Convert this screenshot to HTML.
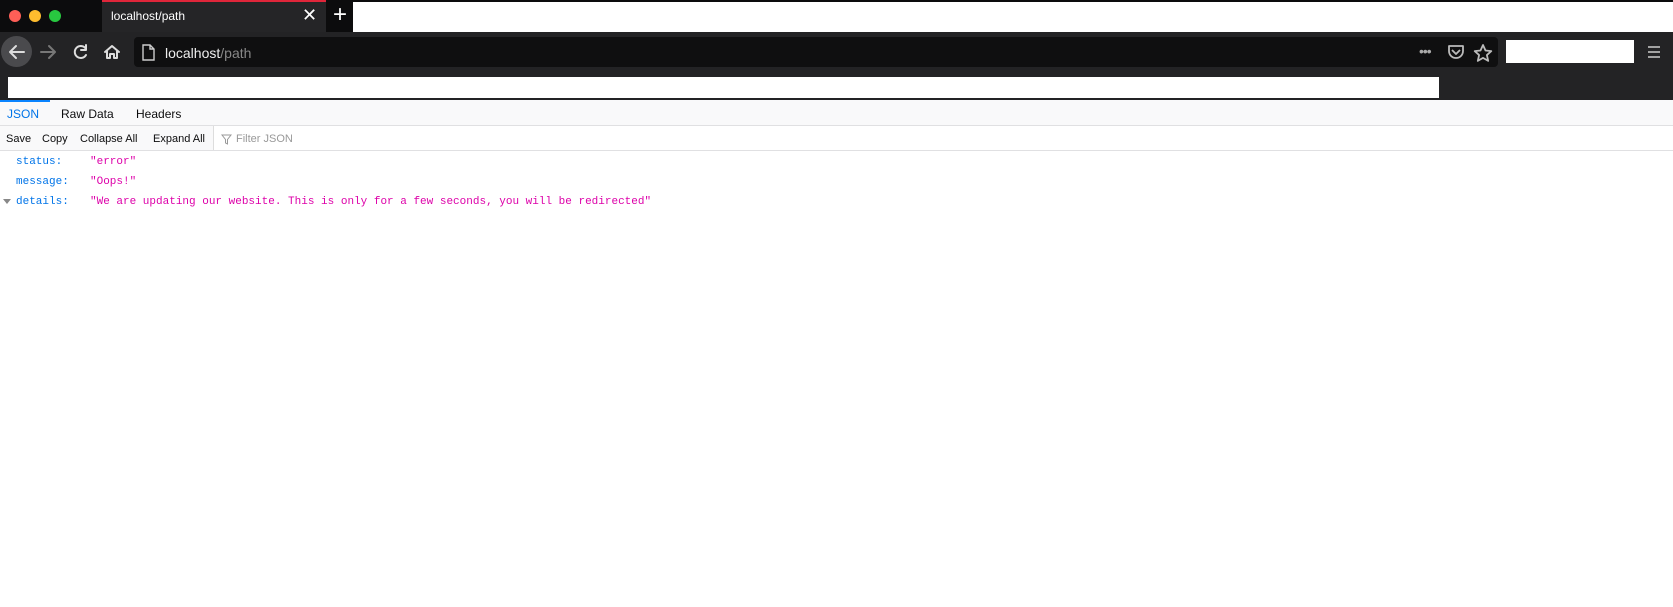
<!DOCTYPE html>
<html><head><style>
*{margin:0;padding:0;box-sizing:border-box}
body{width:1673px;height:607px;background:#fff;font-family:"Liberation Sans",sans-serif;position:relative;overflow:hidden}
.a{position:absolute}
.mono{font-family:"Liberation Mono",monospace;font-size:11px}
.k{color:#0074e8}.v{color:#dd00a9}
</style></head><body>
<div class="a" style="left:0;top:0;width:353px;height:32px;background:#0c0c0d"></div>
<div class="a" style="left:353px;top:0;width:1320px;height:32px;background:#fff;border-top:2px solid #0c0c0d"></div>
<div class="a" style="left:9px;top:10px;width:12px;height:12px;border-radius:50%;background:#fe5f57"></div>
<div class="a" style="left:29px;top:10px;width:12px;height:12px;border-radius:50%;background:#febc2e"></div>
<div class="a" style="left:49px;top:10px;width:12px;height:12px;border-radius:50%;background:#28c840"></div>
<div class="a" style="left:102px;top:0;width:224px;height:32px;background:#252527;border-top:2px solid #e0263a"></div>
<div class="a" style="left:111px;top:9px;color:#fff;font-size:12px">localhost/path</div>
<div class="a" style="left:302px;top:5px;color:#fff;font-size:18px">✕</div>
<div class="a" style="left:333px;top:1px;color:#fff;font-size:24px;font-weight:300">+</div>
<div class="a" style="left:0;top:32px;width:1673px;height:69px;background:#232325"></div>
<div class="a" style="left:1px;top:36px;width:31px;height:31px;border-radius:50%;background:#4a4a4d"></div>
<svg class="a" style="left:0;top:33px" width="130" height="38"><g fill="none" stroke-width="2" stroke-linecap="round" stroke-linejoin="round"><path d="M24 19H10M16 13l-6 6 6 6" stroke="#ddd"/><path d="M41 19h14M49 13l6 6-6 6" stroke="#777"/><path d="M86 16a6 6 0 1 0 0 6M86 12v5h-5" stroke="#ddd"/><path d="M105 19l7-6 7 6M107 18v7h3v-4h4v4h3v-7" stroke="#ddd"/></g></svg>
<div class="a" style="left:134px;top:37px;width:1364px;height:30px;background:#0f0f10;border-radius:4px"></div>
<svg class="a" style="left:141px;top:44px" width="16" height="18"><path d="M2 1h7l4 4v11H2z M9 1v4h4" fill="none" stroke="#ccc" stroke-width="1.4"/></svg>
<div class="a" style="left:165px;top:45px;font-size:14px;color:#eee">localhost<span style="color:#888">/path</span></div>
<div class="a" style="left:1419px;top:43px;color:#aaa;font-size:14px;letter-spacing:-1px">•••</div>
<svg class="a" style="left:1447px;top:43px" width="76" height="20"><g fill="none" stroke="#bbb" stroke-width="1.8" stroke-linejoin="round"><path d="M2 3h14v5a7 7 0 0 1-14 0z M5 7l4 4 4-4"/><path d="M36 2l2.5 5.5 5.8.6-4.4 4 1.3 5.8-5.2-3-5.2 3 1.3-5.8-4.4-4 5.8-.6z"/></g></svg>
<div class="a" style="left:1506px;top:40px;width:128px;height:23px;background:#fff"></div>
<svg class="a" style="left:1647px;top:45px" width="14" height="14"><path d="M1 2h12M1 7h12M1 12h12" stroke="#ccc" stroke-width="1.6"/></svg>
<div class="a" style="left:8px;top:77px;width:1431px;height:21px;background:#fff"></div>
<div class="a" style="left:0;top:100px;width:1673px;height:26px;background:#f9f9fa;border-bottom:1px solid #e0e0e2"></div>
<div class="a" style="left:0;top:100px;width:50px;height:2px;background:#0a84ff"></div>
<div class="a" style="left:7px;top:107px;font-size:12px;color:#0074e8">JSON</div>
<div class="a" style="left:61px;top:107px;font-size:12px;color:#0c0c0d">Raw Data</div>
<div class="a" style="left:136px;top:107px;font-size:12px;color:#0c0c0d">Headers</div>
<div class="a" style="left:0;top:126px;width:1673px;height:25px;background:#f9f9fa;border-bottom:1px solid #e0e0e2"></div>
<div class="a" style="left:213px;top:126px;width:1460px;height:24px;background:#fff;border-left:1px solid #ddd"></div>
<div class="a" style="left:6px;top:133px;font-size:11px;color:#0c0c0d">Save</div>
<div class="a" style="left:42px;top:133px;font-size:11px;color:#0c0c0d">Copy</div>
<div class="a" style="left:80px;top:133px;font-size:11px;color:#0c0c0d">Collapse All</div>
<div class="a" style="left:153px;top:133px;font-size:11px;color:#0c0c0d">Expand All</div>
<svg class="a" style="left:221px;top:134px" width="11" height="11"><path d="M1 1h9L6.5 5.5V10L4.5 9V5.5z" fill="none" stroke="#999" stroke-width="1"/></svg>
<div class="a" style="left:236px;top:133px;font-size:11px;color:#999">Filter JSON</div>
<div class="a mono k" style="left:16px;top:156px">status:</div>
<div class="a mono v" style="left:90px;top:156px">"error"</div>
<div class="a mono k" style="left:16px;top:176px">message:</div>
<div class="a mono v" style="left:90px;top:176px">"Oops!"</div>
<svg class="a" style="left:3px;top:199px" width="9" height="6"><path d="M0 0h8L4 5z" fill="#888"/></svg>
<div class="a mono k" style="left:16px;top:196px">details:</div>
<div class="a mono v" style="left:90px;top:196px">"We are updating our website. This is only for a few seconds, you will be redirected"</div>
</body></html>
